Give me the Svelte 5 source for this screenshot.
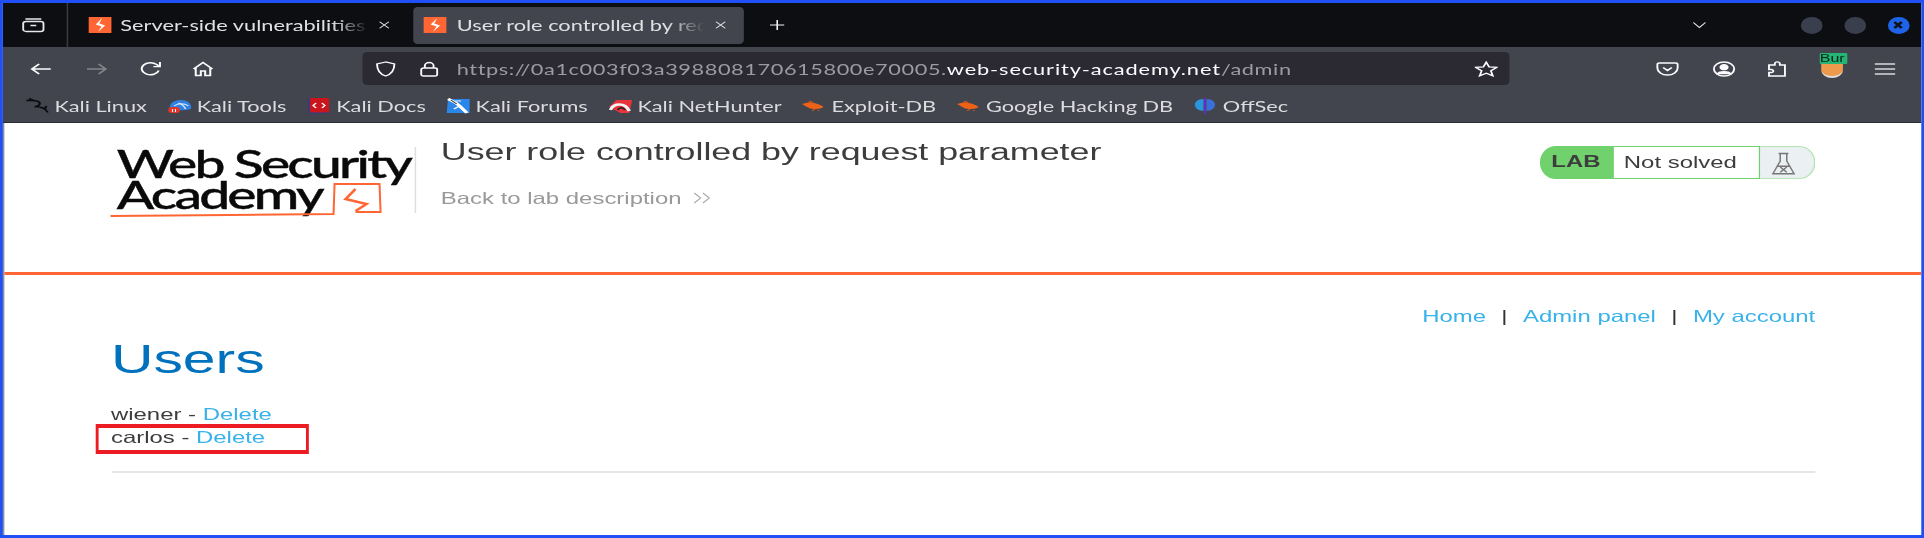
<script>
	// the reference is stretched sideways by about 1.45, so the frame is laid out narrow and scaled
	const nav = ['Home', 'Admin panel', 'My account']
</script>

<div class="frame">
	<div class="tabs">
		<div class="side">
			<svg class="ic" viewBox="0 0 16 16" fill="none" stroke="#e8e8ea" stroke-width="1.3">
				<rect x="1" y="4.500" width="14" height="10" rx="2" />
				<path d="M2.500 2h11M6 8.500h4" />
			</svg>
		</div>
		<div class="tab">
			<svg class="ic" viewBox="0 0 16 16"><rect width="16" height="16" fill="#ff6633" /><path d="M9.500 1 5 7.500l4 2L6.500 15l5-6.500-4-2z" fill="#fff" /></svg>
			<span class="tab-title">Server-side vulnerabilities</span>
			<svg class="x" viewBox="0 0 10 10" stroke="#e8e8ea" stroke-width="1.100"><path d="M1 1l8 8M9 1l-8 8" /></svg>
		</div>
		<div class="tab active">
			<svg class="ic" viewBox="0 0 16 16"><rect width="16" height="16" fill="#ff6633" /><path d="M9.500 1 5 7.500l4 2L6.500 15l5-6.500-4-2z" fill="#fff" /></svg>
			<span class="tab-title">User role controlled by request parameter</span>
			<svg class="x" viewBox="0 0 10 10" stroke="#e8e8ea" stroke-width="1.100"><path d="M1 1l8 8M9 1l-8 8" /></svg>
		</div>
		<svg class="plus" viewBox="0 0 12 12" stroke="#f4f4f6" stroke-width="1.300"><path d="M6 0v12M0 6h12" /></svg>
		<svg class="chev" viewBox="0 0 12 8" fill="none" stroke="#e8e8ea" stroke-width="1.100"><path d="M1 1l5 6 5-6" /></svg>
		<span class="win"></span>
		<span class="win"></span>
		<span class="win close"><svg viewBox="0 0 10 10" stroke="#10131c" stroke-width="2"><path d="M2.500 2l5 6M7.500 2l-5 6" /></svg></span>
	</div>

	<div class="toolbar">
		<svg class="ic tb-back" viewBox="0 0 16 16" fill="none" stroke="#fbfbfe" stroke-width="1.400"><path d="M15 8H2M7 3 2 8l5 5" /></svg>
		<svg class="ic fwd" viewBox="0 0 16 16" fill="none" stroke="#83858b" stroke-width="1.400"><path d="M1 8h13M9 3l5 5-5 5" /></svg>
		<svg class="ic reload" viewBox="0 0 16 16" fill="none" stroke="#fbfbfe" stroke-width="1.400"><path d="M13.500 9.500A6 6 0 1 1 12 3.500l2 2M14.300 1v4.600H9.800" /></svg>
		<svg class="ic home" viewBox="0 0 16 16" fill="none" stroke="#fbfbfe" stroke-width="1.400"><path d="M1.500 8 8 1.500 14.500 8M3 7v7.500h3.500V10h3v4.500H13V7" /></svg>
		<div class="urlbar">
			<svg class="ic shield" viewBox="0 0 16 16" fill="none" stroke="#fbfbfe" stroke-width="1.300"><path d="M8 1 2 3c0 6 1.500 10 6 12 4.500-2 6-6 6-12z" /></svg>
			<svg class="ic lock" viewBox="0 0 16 16" fill="none" stroke="#fbfbfe" stroke-width="1.300"><rect x="2.500" y="7" width="11" height="8" rx="1.500" /><path d="M5 7V4.500a3 3 0 0 1 6 0V7" /></svg>
			<span class="url">https://0a1c003f03a398808170615800e70005.<b>web-security-academy.net</b>/admin</span>
			<svg class="ic star" viewBox="0 0 16 16" fill="none" stroke="#fbfbfe" stroke-width="1.300"><path d="M8 1.200 10 6l5.200.4-4 3.400 1.300 5L8 12.200 3.500 14.800l1.300-5-4-3.400L6 6z" /></svg>
		</div>
		<svg class="ic pocket" viewBox="0 0 16 16" fill="none" stroke="#fbfbfe" stroke-width="1.300"><path d="M2.500 2h11A1.500 1.500 0 0 1 15 3.500V7A7 7 0 0 1 1 7V3.500A1.500 1.500 0 0 1 2.500 2zM5 6.500l3 3 3-3" /></svg>
		<svg class="ic account" viewBox="0 0 16 16" fill="none" stroke="#fbfbfe" stroke-width="1.300"><circle cx="8" cy="8" r="7" /><circle cx="8" cy="6.200" r="2.500" fill="#fbfbfe" /><path d="M3.800 12.500c1-2.500 7.400-2.500 8.400 0z" fill="#fbfbfe" /></svg>
		<svg class="ic ext" viewBox="0 0 16 16" fill="none" stroke="#fbfbfe" stroke-width="1.300"><path d="M6 4H2v4.500h1.500a1.500 1.500 0 0 1 0 3H2V15h11V4H9.500V2.700a1.700 1.700 0 0 0-3.500 0z" /></svg>
		<div class="burp">
			<span class="burp-face"></span>
			<span class="burp-tag">Bur</span>
		</div>
		<svg class="ic menu" viewBox="0 0 16 16" stroke="#d8d8dc" stroke-width="1.400"><path d="M1 3h14M1 8h14M1 13h14" /></svg>
	</div>

	<div class="bookmarks">
		<span class="bm">
			<svg class="ic" viewBox="0 0 16 16" fill="none" stroke="#0c0c10" stroke-width="1.500"><path d="M0 2.500h5c4 .5 5.500 2.500 3.500 5-1 1.500-2.500 1-2.500 1 3 0 7 1 9 6M2 .5 6 3M13 11l1-3" /></svg>Kali Linux
		</span>
		<span class="bm">
			<svg class="ic" viewBox="0 0 16 16"><path d="M1 10C1 4 5 2 9 2s7 3 7 8c0 3-15 3-15 0z" fill="#2f80e0" /><path d="M4 8c3-3 7-3 10 0M7 5c2 1 4 3 5 6" stroke="#d6e8fb" fill="none" /><rect x="0" y="9" width="8" height="6" rx="2.500" fill="#e4352a" /><path d="M3 11v3M5 11v3" stroke="#fff" stroke-width=".7" /></svg>Kali Tools
		</span>
		<span class="bm">
			<svg class="ic" viewBox="0 0 16 16"><rect x="1" y="0" width="14" height="15" fill="#c8161c" /><path d="M1 0v15h14" fill="none" stroke="#23408a" stroke-width="1.200" /><path d="M6 5 4 7.500 6 10M10 5l2 2.500L10 10" stroke="#fff" stroke-width="1.200" fill="none" /></svg>Kali Docs
		</span>
		<span class="bm">
			<svg class="ic" viewBox="0 0 16 16"><path d="M1 1h15v14H0z" fill="#2a86e8" /><path d="M1 1c3 2 6 4 8 7s4 5 5 7" stroke="#fff" stroke-width="2.600" fill="none" /><path d="M6 3h4M5 11l4-3" stroke="#eef4fb" stroke-width="1.200" /><path d="M3 2l4 4" stroke="#222" stroke-width=".8" /></svg>Kali Forums
		</span>
		<span class="bm">
			<svg class="ic" viewBox="0 0 16 16"><path d="M0 9 5 2h11l-2 13H8z" fill="#e8343c" /><path d="M1 12C3 5 11 4 14 13" stroke="#f4f4f6" stroke-width="2.400" fill="none" /><path d="M6 12c1-3 4-3 5 0" stroke="#222" stroke-width="1.300" fill="none" /></svg>Kali NetHunter
		</span>
		<span class="bm">
			<svg class="ic" viewBox="0 0 16 16"><path d="M0 6c3-1 5-3 7-1 3 0 6 2 8 4-2 2-5 2-7 2-3 0-5-3-8-5z" fill="#ee6218" /><path d="M5 3l3 2M7 13l2-2M11 12l1 1" stroke="#d9551a" /></svg>Exploit-DB
		</span>
		<span class="bm">
			<svg class="ic" viewBox="0 0 16 16"><path d="M0 6c3-1 5-3 7-1 3 0 6 2 8 4-2 2-5 2-7 2-3 0-5-3-8-5z" fill="#ee6218" /><path d="M5 3l3 2M7 13l2-2M11 12l1 1" stroke="#d9551a" /></svg>Google Hacking DB
		</span>
		<span class="bm">
			<svg class="ic" viewBox="0 0 16 16"><path d="M7 1C3 1 1 4 1 7s3 6 6 6z" fill="#2a95dc" /><path d="M9 1c4 0 6 3 6 6s-3 6-6 6z" fill="#3a70d8" /><path d="M8 0v16" stroke="#6a2cc4" stroke-width="1.300" /></svg>OffSec
		</span>
	</div>

	<div class="page">
		<header class="lab-head">
			<div class="logo">
				<span class="logo-line">Web Security</span>
				<span class="logo-line">Academy</span>
				<svg class="logo-mark" viewBox="0 0 290 72" preserveAspectRatio="none" fill="none" stroke="#ff6633" stroke-width="2">
					<path d="M-4 69 219 67l1-30h45l1 28h-25" />
					<path d="M241 42l-10 10 21 5-11 7" stroke-width="2.500" />
				</svg>
			</div>
			<div class="title-block">
				<h2>User role controlled by request parameter</h2>
				<a class="back-link" href="#top">Back to lab description
					<svg class="chevrons" viewBox="0 0 16 12" preserveAspectRatio="none" fill="none" stroke="#a8a8a8" stroke-width="1"><path d="M1 1l6 5-6 5M9 1l6 5-6 5" /></svg>
				</a>
			</div>
			<div class="status">
				<span class="lab">LAB</span>
				<span class="not-solved">Not solved</span>
				<span class="flask">
					<svg viewBox="0 0 16 16" preserveAspectRatio="none" fill="none" stroke="#777" stroke-width=".9"><path d="M5 1h6M6 1v5L1.500 14.500h13L10 6V1M4.500 9.500h7M6 10l4 3.500M10 10l-4 3.500" /></svg>
				</span>
			</div>
		</header>

		<section class="content">
			<nav>
				{#each nav as item, i}
					{#if i > 0}<span class="sep">|</span>{/if}
					<a href="#top">{item}</a>
				{/each}
			</nav>
			<h1>Users</h1>
			<div class="user">wiener - <a href="#top">Delete</a></div>
			<div class="user carlos">carlos - <a href="#top">Delete</a><span class="mark"></span></div>
			<hr />
		</section>
	</div>
</div>

<style>
	:global(body) {
		margin: 0;
		overflow: hidden;
		background: #fff;
	}
	.frame {
		box-sizing: border-box;
		width: 1326.9px;
		height: 538px;
		border: solid #1f4ff5;
		border-width: 3px 2.8px 3px 2.8px;
		transform: scaleX(1.45);
		transform-origin: 0 0;
		overflow: hidden;
		display: flex;
		flex-direction: column;
		font-family: Lato, 'Liberation Sans', sans-serif;
		filter: blur(.5px);
	}
	.ic {
		width: 16px;
		height: 16px;
		flex: none;
	}
	.tabs {
		height: 44px;
		background: #0c0e12;
		display: flex;
		align-items: center;
		color: #e0e0e3;
		font-size: 15px;
		flex: none;
	}
	.side {
		width: 31px;
		height: 44px;
		padding-left: 13px;
		border-right: 1px solid #3a3c42;
		display: flex;
		align-items: center;
		margin-right: 5px;
	}
	.tab {
		box-sizing: border-box;
		width: 226px;
		height: 37px;
		margin-right: 6.500px;
		padding: 0 9.500px 0 9px;
		border-radius: 3px/4px;
		display: flex;
		align-items: center;
		gap: 6px;
	}
	.active {
		width: 228px;
		padding: 0 12px 0 7.500px;
		gap: 7px;
		background: #42454e;
	}
	.tab-title {
		flex: 1;
		white-space: nowrap;
		overflow: hidden;
		mask-image: linear-gradient(to right, #000 85%, transparent);
	}
	.x {
		width: 8px;
		height: 10px;
		flex: none;
	}
	.plus {
		width: 10px;
		height: 14px;
		margin-left: 11.500px;
	}
	.chev {
		width: 10px;
		height: 8px;
		margin-left: auto;
		margin-right: 65px;
	}
	.win {
		width: 15px;
		height: 17px;
		border-radius: 50%;
		background: #3a3f4d;
		margin-right: 15px;
		display: flex;
		align-items: center;
		justify-content: center;
	}
	.close {
		background: #1f63e8;
		margin-right: 8px;
	}
	.close svg {
		width: 10px;
		height: 10px;
	}
	.toolbar {
		height: 43px;
		background: #42454e;
		display: flex;
		align-items: center;
		flex: none;
		position: relative;
	}
	.tb-back {
		margin-left: 18px;
	}
	.fwd {
		margin-left: 22.500px;
	}
	.reload {
		margin-left: 21.500px;
	}
	.home {
		margin-left: 20px;
	}
	.urlbar {
		box-sizing: border-box;
		width: 791px;
		height: 33px;
		margin-left: 102px;
		background: #2b2a33;
		border-radius: 3px/4px;
		display: flex;
		align-items: center;
		padding-left: 8px;
		color: #9b9ca1;
		font-size: 15px;
	}
	.lock {
		margin-left: 14px;
	}
	.url {
		margin-left: 11px;
		letter-spacing: .4px;
		white-space: nowrap;
	}
	.url b {
		font-weight: 400;
		letter-spacing: .62px;
		color: #fbfbfe;
	}
	.star {
		margin-left: auto;
		margin-right: 8px;
	}
	.pocket {
		margin-left: 101px;
	}
	.account {
		margin-left: 23px;
	}
	.ext {
		margin-left: 21px;
	}
	.burp {
		position: relative;
		width: 20px;
		height: 26px;
		margin-left: 20px;
		margin-top: -6px;
	}
	.burp-face {
		position: absolute;
		left: 2px;
		top: 9px;
		width: 15px;
		height: 14px;
		border-radius: 0 0 50% 50%;
		background: #ee9a4d;
		border-bottom: 2px solid #ddd;
	}
	.burp-tag {
		position: absolute;
		left: 1px;
		top: 0;
		width: 19px;
		height: 11px;
		overflow: hidden;
		border-radius: 1px;
		background: #24b574;
		color: #07241a;
		font: 11px/11px 'Liberation Sans', sans-serif;
	}
	.menu {
		margin-left: 18px;
	}
	.bookmarks {
		height: 32px;
		background: #42454e;
		border-bottom: 1px solid #2a2c32;
		display: flex;
		align-items: center;
		gap: 14.300px;
		padding-left: 15.500px;
		color: #dcdcdf;
		font-size: 15px;
		flex: none;
	}
	.bm {
		display: flex;
		align-items: center;
		gap: 4px;
		white-space: nowrap;
	}
	.page {
		flex: 1;
		background: #fff;
		border-left: 1px solid #8d8d8d;
		font-family: 'Liberation Sans', Arial, sans-serif;
		color: #3d3d3d;
		font-size: 16.500px;
	}
	.lab-head {
		box-sizing: border-box;
		height: 152px;
		border-bottom: 3px solid #ff6633;
		padding: 24px 0 0 76px;
		display: flex;
		align-items: flex-start;
	}
	.logo {
		box-sizing: border-box;
		position: relative;
		width: 208px;
		height: 66px;
		padding: 1px 0 0 1.500px;
		border-right: 1px solid #dedede;
		color: #0a0a0a;
		font-size: 38px;
		font-family: Lato, sans-serif;
		font-weight: 500;
		letter-spacing: -1.900px;
		-webkit-text-stroke: .4px #0a0a0a;
	}
	.logo-line {
		display: block;
		line-height: 30.500px;
		white-space: nowrap;
	}
	.logo-mark {
		position: absolute;
		left: 0;
		top: 0;
		width: 200px;
		height: 72px;
		overflow: visible;
	}
	.title-block {
		margin-left: 17px;
	}
	h2 {
		margin: -13px 0 0;
		font-size: 24.700px;
		font-weight: 400;
		line-height: 36px;
		white-space: nowrap;
	}
	.back-link {
		display: flex;
		align-items: center;
		gap: 8px;
		margin-top: 18px;
		color: #999;
		font-size: 16.500px;
		line-height: 20px;
	}
	.chevrons {
		width: 12px;
		height: 12px;
	}
	.status {
		margin: -1px 73px 0 auto;
		height: 33px;
		display: flex;
		line-height: 31px;
	}
	.lab {
		box-sizing: border-box;
		width: 51px;
		padding-left: 8px;
		background: #70d16d;
		border-radius: 11px 0 0 11px/16.500px 0 0 16.500px;
		font-weight: 700;
	}
	.not-solved {
		box-sizing: border-box;
		width: 101px;
		padding-left: 7px;
		border: solid #70d16d;
		border-width: 1px 1px 1px 0;
	}
	.flask {
		box-sizing: border-box;
		width: 38px;
		padding: 5px 0 0 7px;
		background: #ebf0f2;
		border: 1px solid #b4e4b2;
		border-left: 0;
		border-radius: 0 11px 11px 0/0 16.500px 16.500px 0;
	}
	.flask svg {
		display: block;
		width: 18px;
		height: 24px;
	}
	.content {
		margin: 0 73px 0 73.500px;
	}
	nav {
		display: flex;
		justify-content: flex-end;
		gap: 10.600px;
		margin-top: 31px;
		line-height: 20px;
	}
	a {
		color: #38b2ea;
		text-decoration: none;
	}
	.back-link {
		color: #999;
	}
	.sep {
		color: #333332;
	}
	h1 {
		margin: 9px 0 0;
		color: #0071bc;
		font-size: 40.600px;
		font-weight: 400;
		line-height: 48px;
	}
	.user {
		line-height: 23px;
	}
	h1 + .user {
		margin-top: 20px;
	}
	.carlos {
		position: relative;
	}
	.mark {
		position: absolute;
		left: -10.500px;
		top: -2px;
		box-sizing: border-box;
		width: 147px;
		height: 30px;
		border: solid #ed1c24;
		border-width: 4px 2.800px;
	}
	hr {
		margin: 22px 0 0;
		border: 0;
		border-top: 2px solid #e6e6e6;
	}
</style>
